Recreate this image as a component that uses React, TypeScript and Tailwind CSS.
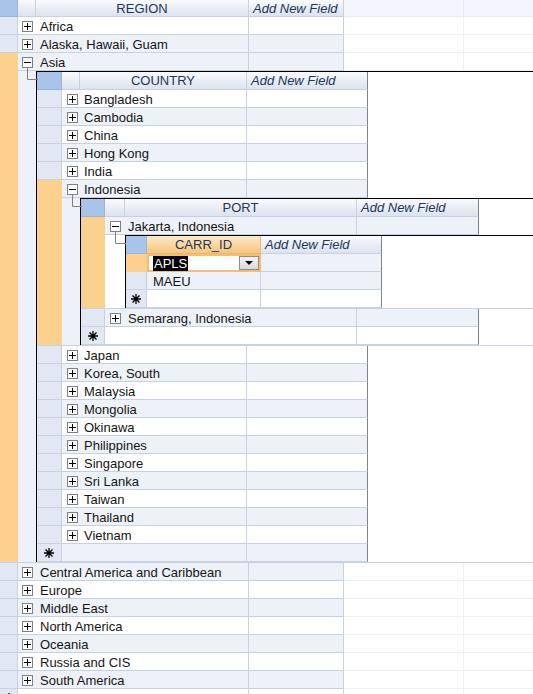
import React from "react";

const GRID = "border-[#c8d1e2]";
const FAINT = "border-[#edf0f5]";
const ALT = "bg-[#edf2f8]";
const WHITE = "bg-white";
const SEL = "bg-[#e1e8f3]";
const ORANGE = "bg-[#fcd18d]";
const HDR = "bg-linear-to-b from-[#f9fafd] to-[#dbe3ee]";
const HTXT = "text-[#22365a]";
const BLUESEL = "bg-[#a9c4e9] border-r border-b border-[#9db3d5]";
const TXT = "flex items-start pt-[1px] whitespace-nowrap";

function Box({ minus }: { minus?: boolean }) {
  return (
    <svg width="11" height="11" viewBox="0 0 11 11" className="block shrink-0">
      <rect x="0.5" y="0.5" width="10" height="10" fill="white" stroke="#808080" />
      <path d="M2 5.5H9" stroke="#000" />
      {!minus && <path d="M5.5 2V9" stroke="#000" />}
    </svg>
  );
}

function Star() {
  return (
    <svg width="10" height="10" viewBox="0 0 10 10" className="block">
      <path
        d="M5 0V10M0 5H10M1.5 1.5L8.5 8.5M8.5 1.5L1.5 8.5"
        stroke="#000"
        strokeWidth="1.3"
      />
    </svg>
  );
}

function Connector({ className, w }: { className: string; w: number }) {
  return (
    <svg
      className={`absolute z-10 overflow-visible ${className}`}
      width={w}
      height="13"
    >
      <path d={`M0.5 0V11.5H${w}`} fill="none" stroke="#808080" />
    </svg>
  );
}

type RowProps = {
  label?: string;
  alt?: boolean;
  minus?: boolean;
  current?: boolean;
  newRow?: boolean;
};

/* ---------------- Top level (REGION) ---------------- */

function TopHeader() {
  return (
    <div className="flex h-[17px]">
      <div className={`w-[18px] shrink-0 ${BLUESEL}`} />
      <div className={`w-[18px] shrink-0 ${HDR} border-r border-b ${GRID}`} />
      <div
        className={`w-[213px] shrink-0 ${HDR} border-r border-b ${GRID} flex items-center justify-center ${HTXT}`}
      >
        REGION
      </div>
      <div
        className={`w-[95px] shrink-0 ${HDR} border-r border-b ${GRID} flex items-center pl-[4px] italic ${HTXT} whitespace-nowrap`}
      >
        Add New Field
      </div>
      <div className="w-[120px] shrink-0 bg-[#f5f6fd] border-r border-b border-[#e6e8f2]" />
      <div className="flex-1 bg-[#f5f6fd] border-b border-[#e6e8f2]" />
    </div>
  );
}

function TopRow({ label, alt, minus, current, newRow }: RowProps) {
  const bg = alt ? ALT : WHITE;
  return (
    <div className="flex h-[18px]">
      {current ? (
        <div className={`w-[18px] shrink-0 ${ORANGE}`} />
      ) : (
        <div
          className={`w-[18px] shrink-0 ${SEL} border-r border-b ${GRID} flex items-center justify-center`}
        >
          {newRow && <Star />}
        </div>
      )}
      <div
        className={`relative w-[18px] shrink-0 ${bg} border-b ${GRID} flex items-start pt-[4px] pl-[4px]`}
      >
        {!newRow && <Box minus={minus} />}
        {minus && <Connector className="left-[9px] top-[15px]" w={11} />}
      </div>
      <div
        className={`w-[213px] shrink-0 ${bg} border-r border-b ${GRID} ${TXT} pl-[4px]`}
      >
        {label}
      </div>
      <div className={`w-[95px] shrink-0 ${bg} border-r border-b ${GRID}`} />
      <div className={`w-[120px] shrink-0 border-r border-b ${FAINT}`} />
      <div className={`flex-1 border-b ${FAINT}`} />
    </div>
  );
}

/* ---------------- Country level ---------------- */

function CountryHeader() {
  return (
    <div className="flex h-[18px]">
      <div className={`w-[25px] shrink-0 ${BLUESEL}`} />
      <div className={`w-[18px] shrink-0 ${HDR} border-r border-b ${GRID}`} />
      <div
        className={`w-[167px] shrink-0 ${HDR} border-r border-b ${GRID} flex items-center justify-center ${HTXT}`}
      >
        COUNTRY
      </div>
      <div
        className={`w-[121px] shrink-0 ${HDR} border-b border-b-[#c8d1e2] border-r border-r-[#7d828c] flex items-center pl-[4px] italic ${HTXT} whitespace-nowrap`}
      >
        Add New Field
      </div>
      <div className="flex-1 bg-white" />
    </div>
  );
}

function CountryRow({ label, alt, minus, current, newRow }: RowProps) {
  const bg = alt ? ALT : WHITE;
  return (
    <div className="flex h-[18px]">
      {current ? (
        <div className={`w-[25px] shrink-0 ${ORANGE}`} />
      ) : (
        <div
          className={`w-[25px] shrink-0 ${SEL} border-r border-b ${GRID} flex items-center justify-center`}
        >
          {newRow && <Star />}
        </div>
      )}
      <div
        className={`relative w-[18px] shrink-0 ${bg} border-b ${GRID} flex items-start pt-[4px] pl-[5px]`}
      >
        {!newRow && <Box minus={minus} />}
        {minus && <Connector className="left-[10px] top-[15px]" w={10} />}
      </div>
      <div
        className={`w-[167px] shrink-0 ${bg} border-r border-b ${GRID} ${TXT} pl-[4px]`}
      >
        {label}
      </div>
      <div
        className={`w-[121px] shrink-0 ${bg} border-b border-b-[#c8d1e2] border-r border-r-[#7d828c]`}
      />
      <div className="flex-1 bg-white" />
    </div>
  );
}

/* ---------------- Port level ---------------- */

function PortHeader() {
  return (
    <div className="flex h-[18px]">
      <div className={`w-[24px] shrink-0 ${BLUESEL}`} />
      <div className={`w-[20px] shrink-0 ${HDR} border-r border-b ${GRID}`} />
      <div
        className={`w-[232px] shrink-0 ${HDR} border-r border-b ${GRID} flex items-center justify-center ${HTXT}`}
      >
        PORT
      </div>
      <div
        className={`w-[122px] shrink-0 ${HDR} border-b border-b-[#c8d1e2] border-r border-r-[#7d828c] flex items-center pl-[4px] italic ${HTXT} whitespace-nowrap`}
      >
        Add New Field
      </div>
      <div className="flex-1 bg-white" />
    </div>
  );
}

function PortRow({ label, alt, minus, current, newRow }: RowProps) {
  const bg = alt ? ALT : WHITE;
  return (
    <div className="flex h-[18px]">
      {current ? (
        <div className={`w-[24px] shrink-0 ${ORANGE}`} />
      ) : (
        <div
          className={`w-[24px] shrink-0 ${SEL} border-r border-b ${GRID} flex items-center justify-center`}
        >
          {newRow && <Star />}
        </div>
      )}
      <div
        className={`relative w-[20px] shrink-0 ${bg} border-b ${GRID} flex items-start pt-[4px] pl-[5px]`}
      >
        {!newRow && <Box minus={minus} />}
        {minus && <Connector className="left-[10px] top-[15px]" w={11} />}
      </div>
      <div
        className={`w-[232px] shrink-0 ${bg} border-r border-b ${GRID} ${TXT} pl-[3px]`}
      >
        {label}
      </div>
      <div
        className={`w-[122px] shrink-0 ${bg} border-b border-b-[#c8d1e2] border-r border-r-[#7d828c]`}
      />
      <div className="flex-1 bg-white" />
    </div>
  );
}

/* ---------------- Carrier level ---------------- */

function CarrHeader() {
  return (
    <div className="flex h-[18px]">
      <div className={`w-[21px] shrink-0 ${BLUESEL}`} />
      <div
        className={`w-[114px] shrink-0 bg-linear-to-b from-[#fde9c8] to-[#f5c57a] border-r border-b border-[#e2b877] flex items-center justify-center ${HTXT}`}
      >
        CARR_ID
      </div>
      <div
        className={`w-[121px] shrink-0 ${HDR} border-b border-b-[#c8d1e2] border-r border-r-[#7d828c] flex items-center pl-[4px] italic ${HTXT} whitespace-nowrap`}
      >
        Add New Field
      </div>
      <div className="flex-1 bg-white" />
    </div>
  );
}

function CarrRow({ label, alt, newRow }: RowProps) {
  const bg = alt ? ALT : WHITE;
  return (
    <div className="flex h-[18px]">
      <div
        className={`w-[21px] shrink-0 ${SEL} border-r border-b ${GRID} flex items-center justify-center`}
      >
        {newRow && <Star />}
      </div>
      <div
        className={`w-[114px] shrink-0 ${bg} border-r border-b ${GRID} ${TXT} pl-[6px]`}
      >
        {label}
      </div>
      <div
        className={`w-[121px] shrink-0 ${bg} border-b border-b-[#c8d1e2] border-r border-r-[#7d828c]`}
      />
      <div className="flex-1 bg-white" />
    </div>
  );
}

function CarrEditRow() {
  return (
    <div className="flex h-[18px]">
      <div className={`w-[21px] shrink-0 ${ORANGE}`} />
      <div className="w-[114px] shrink-0 bg-white border-2 border-[#f5bd72] flex items-center justify-between pl-[4px]">
        <span className="bg-black text-white leading-[14px] px-[1px] pt-[1px]">APLS</span>
        <div className="w-[20px] h-[14px] border border-[#8c8c8c] bg-linear-to-b from-[#f6f6f6] to-[#d9d9d9] flex items-center justify-center">
          <svg width="8" height="4" viewBox="0 0 8 4" className="block">
            <path d="M0 0H8L4 4Z" fill="#000" />
          </svg>
        </div>
      </div>
      <div
        className={`w-[121px] shrink-0 ${ALT} border-b border-b-[#c8d1e2] border-r border-r-[#7d828c]`}
      />
      <div className="flex-1 bg-white" />
    </div>
  );
}

/* ---------------- Blocks ---------------- */

function JakartaBlock() {
  return (
    <div className={`flex border-b ${GRID}`}>
      <div className={`w-[24px] shrink-0 ${ORANGE}`} />
      <div className="w-[20px] shrink-0 bg-white" />
      <div className="flex-1 min-w-0 border-t border-l border-black">
        <CarrHeader />
        <CarrEditRow />
        <CarrRow label="MAEU" alt />
        <CarrRow newRow />
      </div>
    </div>
  );
}

function IndonesiaBlock() {
  return (
    <div className={`flex border-b ${GRID}`}>
      <div className={`w-[25px] shrink-0 ${ORANGE}`} />
      <div className={`w-[18px] shrink-0 ${ALT}`} />
      <div className="flex-1 min-w-0 border-t border-l border-black">
        <PortHeader />
        <PortRow label="Jakarta, Indonesia" alt current minus />
        <JakartaBlock />
        <PortRow label="Semarang, Indonesia" alt />
        <PortRow newRow />
      </div>
    </div>
  );
}

const countriesBefore = ["Bangladesh", "Cambodia", "China", "Hong Kong", "India"];
const countriesAfter = [
  "Japan",
  "Korea, South",
  "Malaysia",
  "Mongolia",
  "Okinawa",
  "Philippines",
  "Singapore",
  "Sri Lanka",
  "Taiwan",
  "Thailand",
  "Vietnam",
];

function AsiaBlock() {
  return (
    <div className={`flex border-b ${GRID}`}>
      <div className={`w-[18px] shrink-0 ${ORANGE}`} />
      <div className={`w-[18px] shrink-0 ${ALT}`} />
      <div className="flex-1 min-w-0 border-t border-l border-black">
        <CountryHeader />
        {countriesBefore.map((c, i) => (
          <CountryRow key={c} label={c} alt={i % 2 === 1} />
        ))}
        <CountryRow label="Indonesia" alt current minus />
        <IndonesiaBlock />
        {countriesAfter.map((c, i) => (
          <CountryRow key={c} label={c} alt={i % 2 === 1} />
        ))}
        <CountryRow newRow alt />
      </div>
    </div>
  );
}

const regionsAfter = [
  "Central America and Caribbean",
  "Europe",
  "Middle East",
  "North America",
  "Oceania",
  "Russia and CIS",
  "South America",
];

export default function App() {
  return (
    <div className="w-[533px] h-[694px] overflow-hidden bg-white font-['Liberation_Sans',Arial,sans-serif] text-[13px] leading-[17px] text-[#141414]">
      <TopHeader />
      <TopRow label="Africa" />
      <TopRow label="Alaska, Hawaii, Guam" alt />
      <TopRow label="Asia" alt current minus />
      <AsiaBlock />
      {regionsAfter.map((r, i) => (
        <TopRow key={r} label={r} alt={i % 2 === 0} />
      ))}
      <TopRow newRow />
    </div>
  );
}
